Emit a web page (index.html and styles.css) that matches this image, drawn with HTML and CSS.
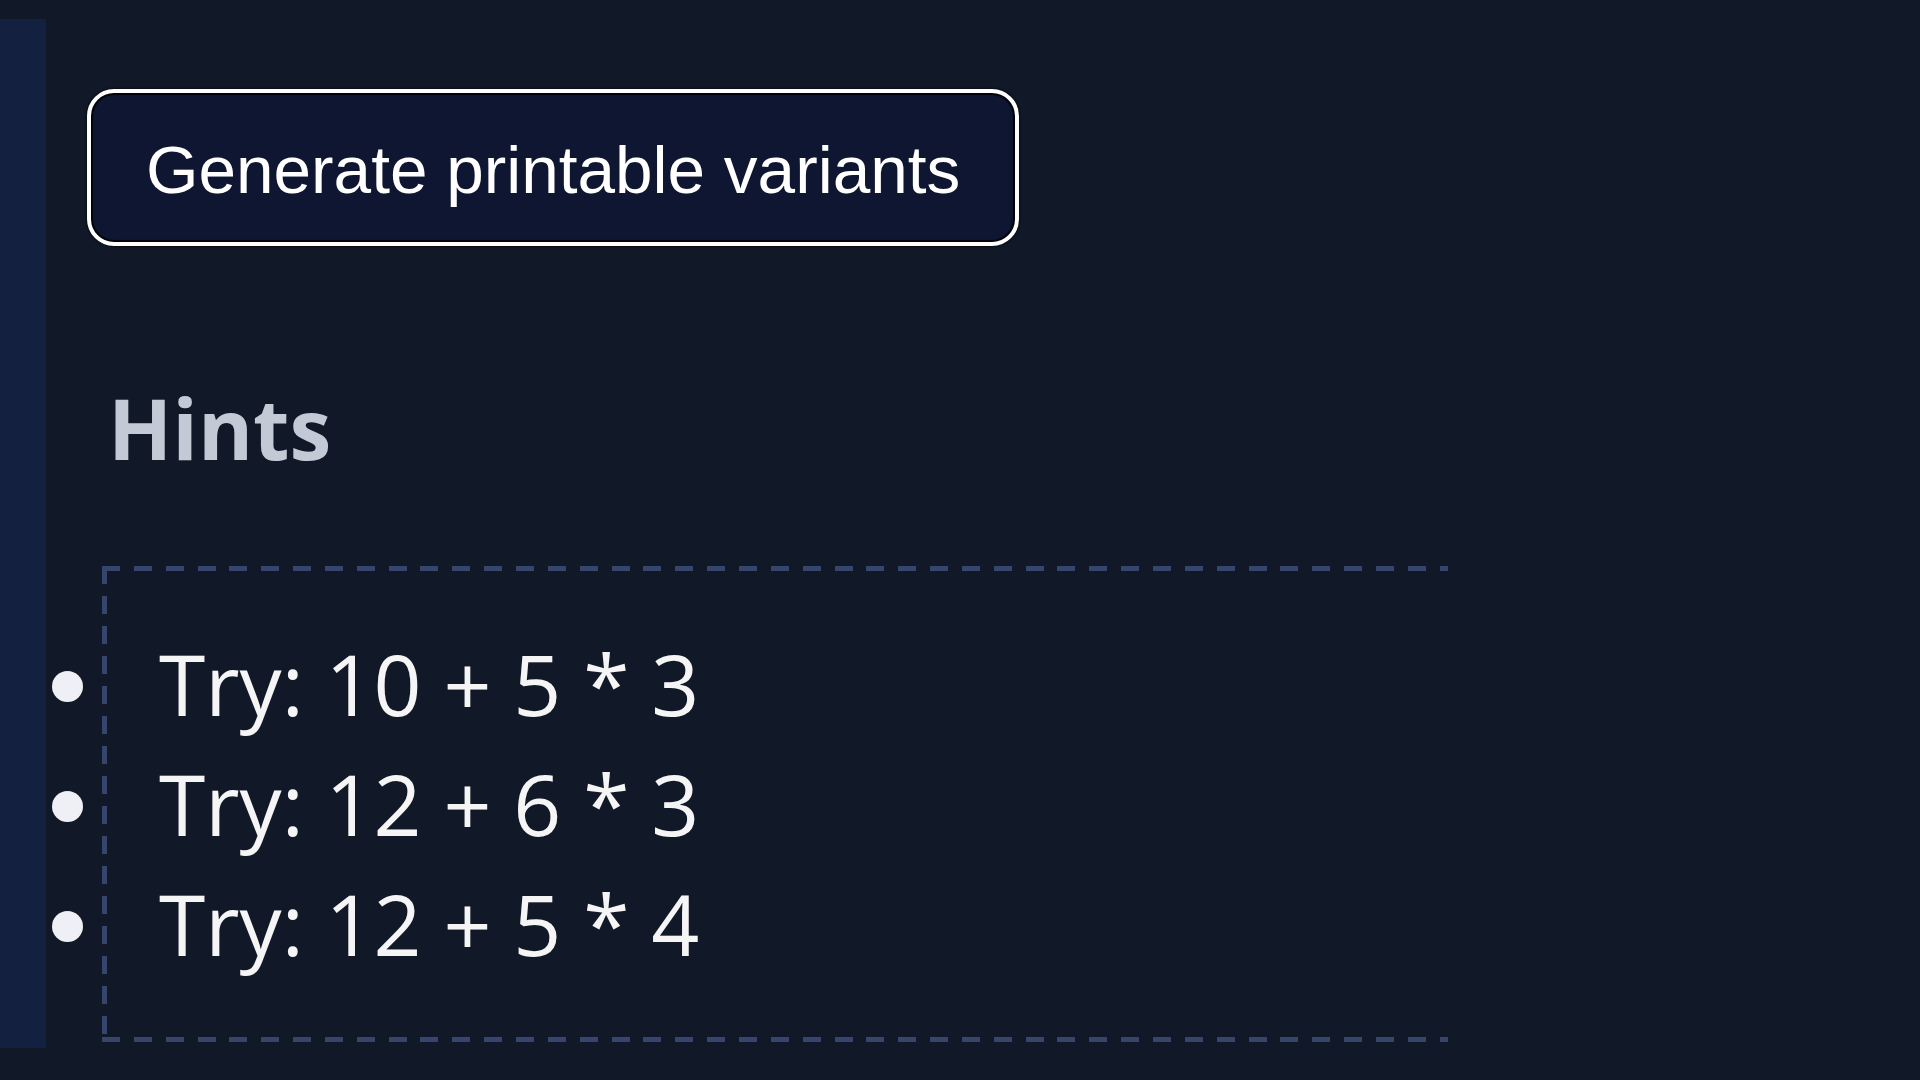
FILE: index.html
```html
<!DOCTYPE html>
<html lang="en">
<head>
<meta charset="utf-8">
<title>Hints</title>
<link rel="stylesheet" href="styles.css">
</head>
<body>
<div class="layout">
  <aside class="rail"></aside>
  <main class="content">
    <button class="gen-btn" type="button">Generate printable variants</button>
    <h2 class="hints-title">Hints</h2>
    <ul class="hints-list">
      <li>Try: 10 + 5 * 3</li>
      <li>Try: 12 + 6 * 3</li>
      <li>Try: 12 + 5 * 4</li>
    </ul>
  </main>
</div>
</body>
</html>
```

FILE: styles.css
```css
html, body {
  margin: 0;
  padding: 0;
  background: #111827;
  width: 1920px;
  height: 1080px;
  overflow: hidden;
}

.layout {
  display: flex;
  padding-top: 19px;
  height: 1029px;
}

.rail {
  width: 46px;
  flex: 0 0 46px;
  height: 1029px;
  background: #14203f;
}

.content {
  flex: 1;
  display: flex;
  flex-direction: column;
  align-items: flex-start;
  padding-left: 41px;
  padding-top: 70px;
}

.gen-btn {
  font-family: "Liberation Sans", Arial, sans-serif;
  font-size: 67.5px;
  line-height: normal;
  color: #ffffff;
  background: #0f1631;
  border: 4px solid #ffffff;
  border-radius: 27px;
  padding: 38px 55px 34px;
  margin: 0;
  box-shadow: inset 0 0 1px 2px rgba(0, 0, 0, 0.85), 0 0 2px 1px rgba(0, 0, 0, 0.5);
  cursor: pointer;
}

.hints-title {
  font-family: "Open Sans", "Noto Sans", sans-serif;
  font-weight: 700;
  font-size: 84px;
  line-height: normal;
  color: #c3c9d5;
  margin: 124px 0 0 21px;
}

.hints-list {
  --dash: #36456b;
  font-family: "Open Sans", "Noto Sans", sans-serif;
  font-size: 84px;
  line-height: 120px;
  color: #f5f5f5;
  list-style: none;
  margin: 81px 0 0 15px;
  width: 1289px;
  padding: 58px 0 58px 57px;
  background:
    repeating-linear-gradient(90deg, var(--dash) 0 18px, transparent 18px 31.85px) left top / 100% 5px no-repeat,
    repeating-linear-gradient(90deg, var(--dash) 0 18px, transparent 18px 31.85px) left bottom / 100% 5px no-repeat,
    repeating-linear-gradient(180deg, var(--dash) 0 18px, transparent 18px 30px) left top / 5px 100% no-repeat;
}

.hints-list li::before {
  content: "";
  display: inline-block;
  width: 31px;
  height: 31px;
  border-radius: 50%;
  background: #eef0f5;
  vertical-align: 14px;
  margin-left: -107px;
  margin-right: 76px;
}
```
